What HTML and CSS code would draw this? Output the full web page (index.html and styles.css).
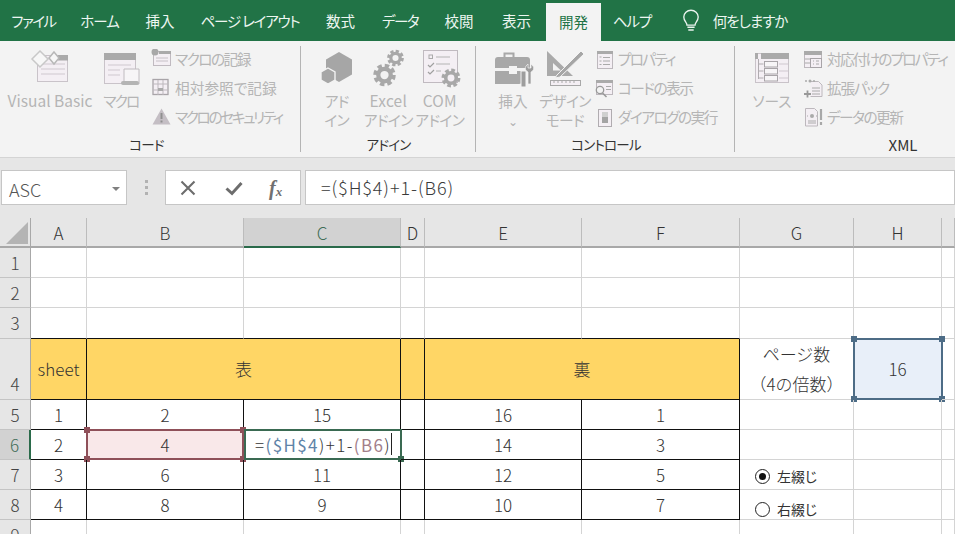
FILE: index.html
```html
<!DOCTYPE html>
<html lang="ja">
<head>
<meta charset="utf-8">
<title>Excel</title>
<link rel="stylesheet" href="styles.css">
</head>
<body>
<svg class="defs" width="0" height="0">
  <defs>
    <g id="gear"><circle r="7.2" fill="none" stroke="currentColor" stroke-width="3.6" stroke-dasharray="3.4 2.25"/><circle r="5" fill="none" stroke="currentColor" stroke-width="3.4"/></g>
  </defs>
</svg>
<header class="tabs">
  <div class="tab t15">ファイル</div>
  <div class="tab t10">ホーム</div>
  <div class="tab">挿入</div>
  <div class="tab t12">ページ レイアウト</div>
  <div class="tab">数式</div>
  <div class="tab t15">データ</div>
  <div class="tab">校閲</div>
  <div class="tab">表示</div>
  <div class="tab active">開発</div>
  <div class="tab t12">ヘルプ</div>
  <div class="tab"><svg width="18" height="24" viewBox="0 0 20 26"><path d="M5.500 17.500c0-3-3.500-4.500-3.500-9a8 7.500 0 0 1 16 0c0 4.500-3.500 6-3.500 9z" fill="none" stroke="#eaf4ef" stroke-width="1.500"/><path d="M6 20h8M7 23h6" stroke="#eaf4ef" stroke-width="1.700"/></svg></div>
  <div class="tab t10">何をしますか</div>
</header>

<section class="ribbon">
  <div class="group g1">
    <div class="items">
      <div class="big w100">
        <svg class="ic" viewBox="28 45 44 45"><rect x="37.500" y="55.500" width="30" height="26" fill="#f4eff4" stroke="#c9c3c9"/><rect x="58" y="55" width="10" height="5.500" fill="#aaa"/><path d="M41 64h24M41 69h24M41 74h24" stroke="#cfc8cf"/><path d="M40 51l8 8-8 8-8-8z" fill="#f7f7f7" stroke="#c8c8c8" stroke-width="1.500"/><path d="M54 52l5 6-5 6-5-6z" fill="#f7f7f7" stroke="#b8b8b8" stroke-width="1.500"/></svg>
        <span class="lat wide">Visual Basic</span>
      </div>
      <div class="big w42">
        <svg class="ic" viewBox="99 45 44 45"><rect x="104.500" y="53.500" width="31" height="30" fill="#f4eff4" stroke="#c9c3c9"/><rect x="104" y="53" width="32" height="7" fill="#aaa"/><path d="M108 65h23M108 70h12M108 75h12" stroke="#cfc8cf"/><path d="M124 69h15v15h-15z" fill="#f7f5f7" stroke="#c0bbc0"/><rect x="121" y="81" width="18" height="4" rx="2" fill="#b4b4b4"/></svg>
        <span class="nr2">マクロ</span>
      </div>
      <div class="smalls s1">
        <div class="small"><svg class="sic" viewBox="152 49 22 22"><rect x="154.500" y="51.500" width="17" height="14" fill="#f4eff4" stroke="#c0bac0"/><rect x="160" y="51" width="12" height="3" fill="#aaa"/><path d="M157 58h12M157 61h12" stroke="#c6c0c6"/><circle cx="156" cy="52" r="3.500" fill="#a8a8a8"/></svg><span class="n15">マクロの記録</span></div>
        <div class="small"><svg class="sic" viewBox="152 78 22 22"><rect x="154" y="79.500" width="15" height="15" fill="#f4eff4" stroke="#a8a4a8" stroke-width="1.300"/><path d="M154 84h15M154 90h15M159 80v15M164 80v15" stroke="#bdb8bd"/><path d="M159 88h5v3h-5z" fill="#aaa"/></svg><span>相対参照で記録</span></div>
        <div class="small"><svg class="sic" viewBox="151 106 22 22"><path d="M161.500 107.500l9 16h-18z" fill="#c4bec4"/><path d="M161.500 112v6M161.500 119.500v2" stroke="#8f8f8f" stroke-width="2"/></svg><span class="n22">マクロのセキュリティ</span></div>
      </div>
    </div>
    <div class="glabel lb1">コード</div>
  </div>

  <div class="group g2">
    <div class="items">
      <div class="big w51">
        <svg class="ic" viewBox="315 45 44 45"><path d="M339 52l13 7.500v15l-13 7.500-13-7.500v-15z" fill="#a6a6a6"/><path d="M328 68l7 4v8l-7 4-7-4v-8z" fill="#a6a6a6" stroke="#f3f3f3" stroke-width="1.400"/></svg>
        <span class="nr1">アド<br>イン</span>
      </div>
      <div class="big w51">
        <svg class="ic gearc" viewBox="366.500 45 44 45"><use href="#gear" transform="translate(385 75) scale(1.250)"/><use href="#gear" transform="translate(396 58) scale(.93)"/></svg>
        <span class="nr1"><b class="lat">Excel</b><br>アドイン</span>
      </div>
      <div class="big w51">
        <svg class="ic" viewBox="418 45 44 45"><rect x="423.500" y="50.500" width="34" height="32" fill="#f4eff4" stroke="#c0bac0"/><rect x="429" y="55" width="3.500" height="3.500" fill="none" stroke="#aaa"/><path d="M436 57h14M436 64h14M436 71h5" stroke="#b4b4b4"/><path d="M428 65l2 2 4-4M428 72l2 2 4-4" fill="none" stroke="#a0a0a0" stroke-width="1.200"/><use href="#gear" class="gearc" transform="translate(451 78) scale(1.050)"/></svg>
        <span class="nr1"><b class="lat">COM</b><br>アドイン</span>
      </div>
    </div>
    <div class="glabel lb2">アドイン</div>
  </div>

  <div class="group g3">
    <div class="items">
      <div class="big w52">
        <svg class="ic" viewBox="491 45 44 45"><path d="M504.500 57v-3.500h9V57" fill="none" stroke="#a8a8a8" stroke-width="2"/><path d="M495 60a3 3 0 0 1 3-3h29a3 3 0 0 1 3 3v8h-35z" fill="#a8a8a8"/><path d="M495 71h14v3h8v-3h5v10a3 3 0 0 1-3 3h-24z" fill="#a8a8a8"/><rect x="509" y="66" width="8" height="6" fill="#f3f3f3"/><path d="M521 71h5v16h-5z" fill="#9d9d9d" stroke="#f3f3f3"/><path d="M528 84V72a4 4 0 0 1-2-6l2-2v4h3v-4l2 2a4 4 0 0 1-2 6v12z" fill="#9d9d9d" stroke="#f3f3f3" stroke-width=".7"/></svg>
        <span>挿入<br><i class="chev">⌄</i></span>
      </div>
      <div class="big w52">
        <svg class="ic" viewBox="543 45 44 45"><path d="M547 51v25h26z" fill="#aaa"/><path d="M553 63v7.500h8z" fill="#f3f3f3"/><path d="M557 75l24-24 3 3-24 23-5 1z" fill="#a6a6a6" stroke="#f3f3f3"/><rect x="550.500" y="80.500" width="30" height="5" fill="#f4eff4" stroke="#a8a8a8"/><path d="M554 81v2M558 81v2M562 81v2M566 81v2M570 81v2M574 81v2" stroke="#a8a8a8"/></svg>
        <span class="nr1">デザイン<br>モード</span>
      </div>
      <div class="smalls s3">
        <div class="small"><svg class="sic" viewBox="594 47 22 22"><rect x="597.500" y="49.500" width="15" height="17" fill="#f4eff4" stroke="#bdb8bd"/><rect x="597" y="49" width="16" height="3" fill="#aaa"/><path d="M603 55.500h7M603 59h7M603 62.500h7" stroke="#aaa"/><path d="M599.500 55h2M599.500 59h2M599.500 62.500h2" stroke="#aaa"/></svg><span class="n18">プロパティ</span></div>
        <div class="small"><svg class="sic" viewBox="594 77 22 22"><rect x="596.500" y="79.500" width="16" height="14" fill="#f4eff4" stroke="#bdb8bd"/><rect x="596" y="79" width="17" height="3" fill="#aaa"/><circle cx="600" cy="89" r="3.700" fill="#f3f3f3" stroke="#999" stroke-width="1.300"/><path d="M602.500 92l4 4" stroke="#999" stroke-width="1.600"/><path d="M606 85.500h5M606 88.500h5" stroke="#aaa"/></svg><span class="n15">コードの表示</span></div>
        <div class="small"><svg class="sic" viewBox="594 105 22 22"><rect x="598.500" y="107.500" width="13" height="17" fill="#f4eff4" stroke="#b0acb0"/><rect x="602" y="110" width="6" height="5" fill="#cfcfcf"/><rect x="602" y="115" width="6" height="6" fill="#a4a4a4"/></svg><span class="n15">ダイアログの実行</span></div>
      </div>
    </div>
    <div class="glabel lb2">コントロール</div>
  </div>

  <div class="group g4">
    <div class="items">
      <div class="big w52 bfirst">
        <svg class="ic" viewBox="750 45 44 45"><rect x="755.500" y="53.500" width="33" height="29" fill="#f4eff4" stroke="#c9c3c9"/><rect x="761" y="53" width="28" height="6" fill="#aaa"/><rect x="755" y="53" width="3" height="6" fill="#aaa"/><path d="M758.500 59v20M758.500 64h5M758.500 71h5M758.500 78h5" stroke="#b0acb0"/><rect x="764.500" y="61.500" width="13" height="5.500" fill="#f7f5f7" stroke="#a8a4a8"/><rect x="764.500" y="68.500" width="13" height="5.500" fill="#f7f5f7" stroke="#a8a4a8"/><rect x="764.500" y="75.500" width="13" height="5.500" fill="#f7f5f7" stroke="#a8a4a8"/><path d="M779 64h9M779 71h9M779 78h9" stroke="#cfc8cf"/></svg>
        <span>ソース</span>
      </div>
      <div class="smalls s4">
        <div class="small"><svg class="sic" viewBox="802 48 22 22"><rect x="803.500" y="50.500" width="17" height="16" fill="#f4eff4" stroke="#bdb8bd"/><rect x="803" y="50" width="18" height="4" fill="#aaa"/><rect x="809.500" y="57.500" width="11" height="9" fill="#f4eff4" stroke="#a8a4a8"/><path d="M804 58h5M804 62h5M812 60h1M815 60h3M812 63h1M815 63h3" stroke="#aaa"/></svg><span class="n19">対応付けのプロパティ</span></div>
        <div class="small"><svg class="sic" viewBox="802 77 22 22"><path d="M809.500 80.500h8l3.500 3.500v11.500h-11.500" fill="#f4eff4" stroke="#bdb8bd"/><path d="M811 87h8M811 90h8M811 93h8" stroke="#aaa"/><circle cx="809" cy="80" r="1.500" fill="#aaa"/><circle cx="805" cy="80" r="1" fill="#aaa"/><circle cx="813" cy="80" r="1" fill="#aaa"/><path d="M803 93h7M806.500 89.500v7" stroke="#999" stroke-width="1.800"/></svg><span class="n12">拡張パック</span></div>
        <div class="small"><svg class="sic" viewBox="803 106 22 22"><path d="M805.500 107.500h9l3 3v14.500h-12z" fill="#f4eff4" stroke="#bdb8bd"/><circle cx="812" cy="115" r="2" fill="#aaa"/><path d="M807 115h1M816 115h1M808 120h8M808 122h8" stroke="#aaa"/><path d="M821 108v11M821 121v3" stroke="#a8a8a8" stroke-width="2.200"/></svg><span class="n15">データの更新</span></div>
      </div>
    </div>
    <div class="glabel lb4">XML</div>
  </div>
</section>

<section class="fbar">
  <div class="namebox"><span>ASC</span><i class="drop"></i></div>
  <div class="grip"><i></i><i></i><i></i></div>
  <div class="fbtns">
    <svg width="18" height="18" viewBox="0 0 18 18"><path d="M2.500 2.500l13 13M15.500 2.500l-13 13" stroke="#6d6d6d" stroke-width="2.100"/></svg>
    <svg width="18" height="18" viewBox="0 0 18 18"><path d="M1.500 9.500l5.500 5L16.500 4" fill="none" stroke="#6d6d6d" stroke-width="3"/></svg>
    <span class="fx">f<sub>x</sub></span>
  </div>
  <div class="finput">=($H$4)+1-(B6)</div>
</section>

<main class="sheet">
  <div class="hd corner"><svg width="31" height="30" viewBox="0 0 31 30"><path d="M28 4v22H6z" fill="#b4b4b4"/></svg></div>
  <div class="hd">A</div><div class="hd">B</div><div class="hd on-col">C</div><div class="hd">D</div><div class="hd">E</div><div class="hd">F</div><div class="hd">G</div><div class="hd">H</div><div class="hd"></div>

  <div class="rh">1</div><div class="c"></div><div class="c"></div><div class="c"></div><div class="c"></div><div class="c"></div><div class="c"></div><div class="c"></div><div class="c"></div><div class="c"></div>
  <div class="rh">2</div><div class="c"></div><div class="c"></div><div class="c"></div><div class="c"></div><div class="c"></div><div class="c"></div><div class="c"></div><div class="c"></div><div class="c"></div>
  <div class="rh">3</div><div class="c kb"></div><div class="c kb"></div><div class="c kb"></div><div class="c kb"></div><div class="c kb"></div><div class="c kb"></div><div class="c"></div><div class="c"></div><div class="c"></div>

  <div class="rh end">4</div>
  <div class="c k y">sheet</div><div class="c k y s2">表</div><div class="c k y"></div><div class="c k y s2">裏</div>
  <div class="c stack"><span>ページ数</span><span>（4の倍数）</span></div>
  <div class="c blue">16<b class="frame fb"><i class="h tl"></i><i class="h tr"></i><i class="h bl"></i><i class="h br"></i></b></div>
  <div class="c"></div>

  <div class="rh">5</div><div class="c k">1</div><div class="c k">2</div><div class="c k">15</div><div class="c k"></div><div class="c k">16</div><div class="c k">1</div><div class="c"></div><div class="c"></div><div class="c"></div>

  <div class="rh on-row">6</div><div class="c k">2</div>
  <div class="c k pink">4<b class="frame fr"><i class="h tl"></i><i class="h tr"></i><i class="h bl"></i><i class="h br"></i></b></div>
  <div class="c k edit"><span>=<em class="cb">($H$4</em>)+1-<em class="cr">(B6</em>)</span><u class="caret"></u><b class="frame fg"><i class="h br"></i></b></div>
  <div class="c k"></div><div class="c k">14</div><div class="c k">3</div><div class="c"></div><div class="c"></div><div class="c"></div>

  <div class="rh">7</div><div class="c k">3</div><div class="c k">6</div><div class="c k">11</div><div class="c k"></div><div class="c k">12</div><div class="c k">5</div><div class="c"></div><div class="c"></div><div class="c"></div>
  <div class="rh">8</div><div class="c k">4</div><div class="c k">8</div><div class="c k">9</div><div class="c k"></div><div class="c k">10</div><div class="c k">7</div><div class="c"></div><div class="c"></div><div class="c"></div>
  <div class="rh">9</div><div class="c"></div><div class="c"></div><div class="c"></div><div class="c"></div><div class="c"></div><div class="c"></div><div class="c"></div><div class="c"></div><div class="c"></div>

  <label class="radio r1"><i class="dot checked"></i>左綴じ</label>
  <label class="radio r2"><i class="dot"></i>右綴じ</label>
</main>
</body>
</html>
```
FILE: styles.css
```css
* { box-sizing: border-box; }
html, body { margin: 0; height: 534px; overflow: hidden; background: #fff; }
body { width: 955px; font-family: "Noto Sans CJK JP", "Noto Sans", sans-serif; color: #333; }
.defs { position: absolute; }
i, em, b, u { font-style: normal; font-weight: normal; text-decoration: none; }

/* tabs */
.tabs {
  height: 41px; background: #217346; color: #edf6f1;
  display: grid; grid-template-columns: 67px 65px 56px 124px 57px 62px 56px 59px 55px 62px 56px 62px;
  font-size: 14.500px; font-feature-settings: "palt"; white-space: nowrap;
}
.tab { display: flex; align-items: center; justify-content: center; letter-spacing: 0; }
.t10 { letter-spacing: -1px; } .t12 { letter-spacing: -1.200px; } .t15 { letter-spacing: -1.500px; }
.tab.active { background: #f3f3f3; color: #217346; margin-top: 3px; padding-bottom: 2px; }

/* ribbon */
.ribbon { height: 117px; background: #f3f3f3; border-bottom: 1px solid #d4d4d4; display: flex; padding-top: 4px; color: #b5b5b5; font-size: 14.700px; line-height: 19px; font-feature-settings: "palt"; overflow: hidden; }
.group { position: relative; height: 112px; flex: none; display: flex; flex-direction: column; }
.group::after { content: ""; position: absolute; right: 0; top: 1px; bottom: 5px; width: 1px; background: #b4b4b4; }
.g1 { width: 301px; } .g2 { width: 175px; padding-left: 10px; } .g3 { width: 259px; padding-left: 11px; } .g4 { width: 336px; }
.g4::after { display: none; }
.items { flex: 1; display: flex; }
.glabel { height: 24px; line-height: 23px; text-align: center; color: #333; font-size: 13.500px; letter-spacing: -.8px; }
.lb1 { padding-right: 8px; } .lb2 { margin-left: -10px; } .lb4 { font-size: 15px; letter-spacing: 0; }
.big { flex: none; display: flex; flex-direction: column; align-items: center; text-align: center; white-space: nowrap; }
.big > span { display: block; margin-top: 1px; }
.ic { width: 44px; height: 45px; display: block; flex: none; }
.gearc { color: #a8a8a8; }
.w100 { width: 100px; } .w42 { width: 42px; } .w51 { width: 51.500px; } .w52 { width: 52px; }
.bfirst { margin-left: 11px; }
.lat { font-size: 15.500px; letter-spacing: .2px; }
.wide { letter-spacing: 0; }
.chev { font-size: 12px; line-height: 12px; color: #b0b0b0; }
.smalls { display: flex; flex-direction: column; white-space: nowrap; }
.s1 { margin-left: 9px; } .s3 { margin-left: 3px; } .s4 { margin-left: 5px; }
.small { height: 29px; display: flex; align-items: center; }
.small span { padding-bottom: 2px; }
.sic { width: 22px; height: 22px; flex: none; margin-right: 2px; }
.nr1 { letter-spacing: -.6px; } .nr2 { letter-spacing: -1.800px; }
.n12 { letter-spacing: -1.200px; } .n15 { letter-spacing: -1.550px; } .n18 { letter-spacing: -1.800px; } .n19 { letter-spacing: -1.800px; } .n22 { letter-spacing: -2.400px; }

/* formula bar */
.fbar { height: 60px; background: #e6e6e6; display: flex; padding: 12px 0 0 1px; align-items: flex-start; }
.namebox { width: 126px; height: 35px; background: #fff; border: 1px solid #c6c6c6; display: flex; align-items: center; justify-content: space-between; padding: 2px 6px 0 7px; font-size: 18px; font-weight: 300; color: #555; }
.drop { width: 0; height: 0; border: 4px solid transparent; border-top: 4px solid #808080; border-bottom: 0; }
.grip { width: 38px; height: 35px; display: flex; flex-direction: column; align-items: center; justify-content: center; gap: 3px; }
.grip i { width: 3px; height: 3px; background: #b2b2b2; }
.fbtns { width: 136px; height: 35px; background: #fff; border: 1px solid #c6c6c6; display: flex; align-items: center; padding-left: 13px; gap: 28px; }
.fx { font-family: "Liberation Serif", serif; font-style: italic; font-weight: bold; font-size: 20px; color: #707070; line-height: 20px; margin-left: -2px; }
.fx sub { font-size: 13px; vertical-align: -1px; line-height: 0; }
.finput { margin-left: 4px; flex: 1; height: 35px; background: #fff; border: 1px solid #c6c6c6; padding-left: 15px; font-size: 18px; font-weight: 300; letter-spacing: .9px; line-height: 32px; color: #3a3a3a; }

/* sheet */
.sheet {
  position: relative; height: 316px; overflow: hidden;
  display: grid;
  grid-template-columns: 31px 56px 157px 157px 24px 157px 158px 114px 88px 13px;
  grid-template-rows: 30px 30px 30px 31px 61px 30px 30px 30px 30px 30px;
  font-size: 17px; font-weight: 300; color: #333;
}
.hd { background: #e6e6e6; border-right: 1px solid #bcbcbc; border-bottom: 2px solid #a8a8a8; display: flex; align-items: center; justify-content: center; color: #333; font-size: 17px; }
.corner { border-right-color: #a8a8a8; align-items: flex-start; }
.corner svg { display: block; flex: none; }
.on-col { background: #d2d2d2; color: #3f6d57; border-bottom-color: #2a6a4a; }
.rh { background: #e6e6e6; border-right: 1px solid #a8a8a8; border-bottom: 1px solid #c4c4c4; display: flex; align-items: center; justify-content: center; color: #444; padding-bottom: 1px; }
.rh.end { align-items: flex-end; padding-bottom: 3px; }
.on-row { background: #d2d2d2; color: #3f6d57; border-right: 2px solid #2a6a4a; }
.c { position: relative; border-right: 1px solid #d4d4d4; border-bottom: 1px solid #d4d4d4; display: flex; align-items: center; justify-content: center; white-space: nowrap; padding-bottom: 1px; }
.kb { border-bottom-color: #111; }
.k { border-right-color: #111; border-bottom-color: #111; }
.y { background: #ffd665; }
.s2 { grid-column: span 2; }
.stack { flex-direction: column; line-height: 30px; }
.blue { background: #e8eff9; }
.pink { background: #f9e8e9; }
.frame { position: absolute; left: -1px; top: -1px; right: -1px; bottom: -1px; border: 2px solid; pointer-events: none; }
.fb { color: #4d6c86; right: -2px; bottom: -1px; }
.fr { color: #8f5059; }
.fg { color: #3a6a52; left: 0; right: -2px; }
.h { position: absolute; width: 6px; height: 6px; background: currentColor; }
.tl { left: -4px; top: -4px; } .tr { right: -4px; top: -4px; } .bl { left: -4px; bottom: -4px; } .br { right: -4px; bottom: -4px; }
.edit { justify-content: flex-start; padding-left: 11px; background: #fff; letter-spacing: 1.400px; }
.cb { color: #5f84a8; } .cr { color: #a3808a; }
.caret { width: 1px; height: 22px; background: #222; margin-left: 0; flex: none; }
.radio { position: absolute; left: 755px; display: flex; align-items: center; gap: 7px; font-size: 14px; font-weight: 400; line-height: 20px; color: #333; font-feature-settings: "palt"; white-space: nowrap; }
.r1 { top: 248px; } .r2 { top: 281px; }
.dot { width: 15px; height: 15px; border: 1.300px solid #222; border-radius: 50%; background: #fff; display: flex; align-items: center; justify-content: center; flex: none; }
.checked::after { content: ""; width: 7px; height: 7px; border-radius: 50%; background: #111; }
```
